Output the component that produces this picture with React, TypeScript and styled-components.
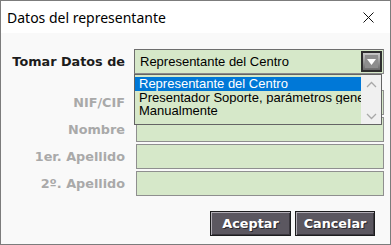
import React from "react";
import styled, { createGlobalStyle } from "styled-components";

const Global = createGlobalStyle`
  html, body { margin: 0; padding: 0; background: #fff; }
  * { box-sizing: border-box; }
`;

const Window = styled.div`
  width: 391px;
  height: 245px;
  border: 1px solid #7c7c7c;
  background: #f9f9f9;
  display: flex;
  flex-direction: column;
  overflow: hidden;
`;

const TitleBar = styled.div`
  height: 32px;
  background: #ffffff;
  display: flex;
  align-items: center;
  justify-content: space-between;
  padding: 0 16px 0 6px;
`;

const Title = styled.span`
  font-family: "Noto Sans", "Segoe UI", sans-serif;
  font-size: 14px;
  color: #000;
`;

const Body = styled.div`
  flex: 1;
  display: flex;
  flex-direction: column;
  padding: 16px 6px 0 4px;
`;

const Form = styled.div`
  display: grid;
  grid-template-columns: 120px 1fr;
  column-gap: 9px;
  row-gap: 2px;
  align-items: center;
`;

const Label = styled.div<{ $disabled?: boolean; $gapBelow?: number }>`
  font-family: "DejaVu Sans", Verdana, sans-serif;
  font-weight: bold;
  font-size: 12.8px;
  text-align: right;
  color: ${(p) => (p.$disabled ? "#a9a9a9" : "#1c1c1c")};
  white-space: nowrap;
  margin-bottom: ${(p) => p.$gapBelow ?? 0}px;
`;

const ComboCell = styled.div`
  position: relative;
  margin-bottom: 14px;
`;

const Combo = styled.div`
  height: 25px;
  background: #d6e8c9;
  border: 1px solid #8a8a8a;
  border-top-color: #6e6e6e;
  border-left-color: #6e6e6e;
  display: flex;
  align-items: center;
  justify-content: space-between;
  padding: 0 1px 0 5px;
  font-family: "Liberation Sans", Arial, sans-serif;
  font-size: 13px;
  color: #000;
`;

const DropList = styled.div`
  position: absolute;
  left: 0;
  top: 25px;
  width: 248px;
  height: 51px;
  background: #d6e8c9;
  border: 1px solid #646464;
  display: flex;
  z-index: 2;
`;

const Options = styled.div`
  flex: 1;
  min-width: 0;
  padding-top: 2px;
  overflow: hidden;
`;

const Option = styled.div<{ $selected?: boolean }>`
  height: 13.5px;
  line-height: 13.5px;
  padding-left: 4px;
  font-family: "Liberation Sans", Arial, sans-serif;
  font-size: 13px;
  white-space: nowrap;
  overflow: hidden;
  color: ${(p) => (p.$selected ? "#ffffff" : "#000")};
  background: ${(p) => (p.$selected ? "#0078d7" : "transparent")};
`;

const ScrollBar = styled.div`
  width: 20px;
  flex: none;
  background: #f0f0f0;
  display: flex;
  flex-direction: column;
  justify-content: space-between;
  align-items: center;
  padding: 6px 0 4px;
`;

const Field = styled.div`
  height: 25px;
  margin-left: 2px;
  background: #d6e8c9;
  border: 1px solid #8f8f8f;
`;

const ButtonRow = styled.div`
  display: flex;
  justify-content: flex-end;
  gap: 4px;
  margin-top: 15px;
  padding-right: 9px;
`;

const Button = styled.button<{ $w: number }>`
  width: ${(p) => p.$w}px;
  height: 25px;
  padding: 0;
  background: #5b5760;
  border: 1px solid #1c1c1e;
  box-shadow: inset 1px 1px 0 #b2aeb6, inset -1px -1px 0 #3a373e;
  font-family: "DejaVu Sans", Verdana, sans-serif;
  font-weight: bold;
  font-size: 12.8px;
  color: #fff;
  text-shadow: 1px 1px 0 #2a282c;
  cursor: default;
`;

const CloseIcon = () => (
  <svg width="11" height="11" viewBox="0 0 11 11">
    <path d="M0.5 0.5 L10.5 10.5 M10.5 0.5 L0.5 10.5" stroke="#111" strokeWidth="1" fill="none" />
  </svg>
);

const ArrowButton = () => (
  <svg width="21" height="21" viewBox="0 0 21 21">
    <defs>
      <linearGradient id="ab" x1="0" y1="0" x2="0" y2="1">
        <stop offset="0" stopColor="#c9c9c9" />
        <stop offset="1" stopColor="#6a6a6a" />
      </linearGradient>
    </defs>
    <rect x="0" y="0" width="21" height="21" fill="#2e2e2e" />
    <rect x="2" y="2" width="17" height="17" fill="url(#ab)" />
    <rect x="4" y="4" width="13" height="13" fill="#8d8d8d" />
    <path d="M6 8 L15 8 L10.5 14 Z" fill="#ffffff" />
  </svg>
);

const Chevron = ({ up }: { up?: boolean }) => (
  <svg width="11" height="7" viewBox="0 0 11 7">
    <path
      d={up ? "M1 6 L5.5 1.5 L10 6" : "M1 1 L5.5 5.5 L10 1"}
      stroke="#a8a8a8"
      strokeWidth="1.3"
      fill="none"
    />
  </svg>
);

export default function App() {
  return (
    <>
      <Global />
      <Window>
        <TitleBar>
          <Title>Datos del representante</Title>
          <CloseIcon />
        </TitleBar>
        <Body>
          <Form>
            <Label $gapBelow={14}>Tomar Datos de</Label>
            <ComboCell>
              <Combo>
                <span>Representante del Centro</span>
                <ArrowButton />
              </Combo>
              <DropList>
                <Options>
                  <Option $selected>Representante del Centro</Option>
                  <Option>Presentador Soporte, parámetros generales</Option>
                  <Option>Manualmente</Option>
                </Options>
                <ScrollBar>
                  <Chevron up />
                  <Chevron />
                </ScrollBar>
              </DropList>
            </ComboCell>
            <Label $disabled>NIF/CIF</Label>
            <Field />
            <Label $disabled>Nombre</Label>
            <Field />
            <Label $disabled>1er. Apellido</Label>
            <Field />
            <Label $disabled>2º. Apellido</Label>
            <Field />
          </Form>
          <ButtonRow>
            <Button $w={81}>Aceptar</Button>
            <Button $w={80}>Cancelar</Button>
          </ButtonRow>
        </Body>
      </Window>
    </>
  );
}
